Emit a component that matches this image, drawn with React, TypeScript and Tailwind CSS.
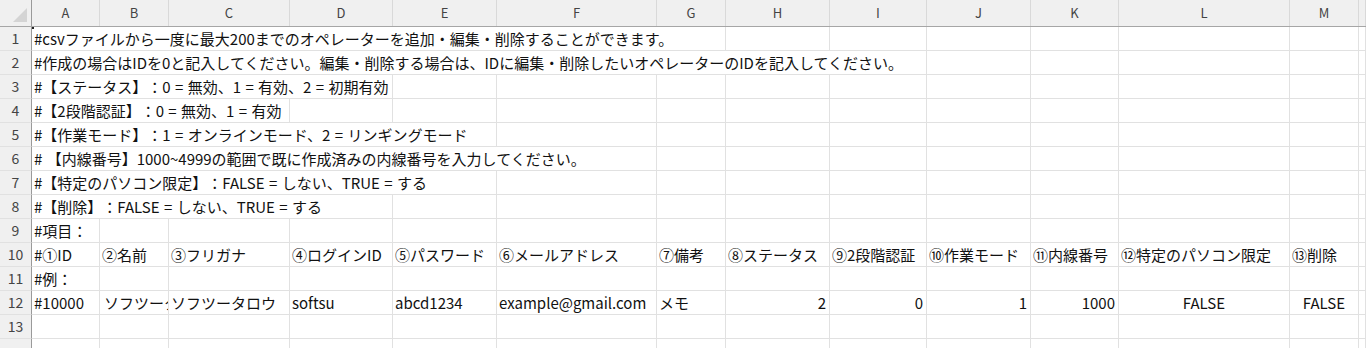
import React from "react"

const gridCols =
  "grid grid-cols-[32px_68px_69px_121px_103px_104px_160px_69px_104px_97px_104px_88px_171px_69px_1fr]"

const letters = ["A", "B", "C", "D", "E", "F", "G", "H", "I", "J", "K", "L", "M", ""]

const spanClass: Record<number, string> = {
  1: "col-span-1",
  2: "col-span-2",
  3: "col-span-3",
  4: "col-span-4",
  5: "col-span-5",
  6: "col-span-6",
  7: "col-span-7",
  8: "col-span-8",
  9: "col-span-9",
}

type Cell = { text?: string; align?: "left" | "right" | "center"; clip?: boolean }

// rows with a long note in column A that runs over the empty cells to its right
const notes: { text: string; span: number }[] = [
  { text: "#csvファイルから一度に最大200までのオペレーターを追加・編集・削除することができます。", span: 7 },
  { text: "#作成の場合はIDを0と記入してください。編集・削除する場合は、IDに編集・削除したいオペレーターのIDを記入してください。", span: 9 },
  { text: "#【ステータス】：0 = 無効、1 = 有効、2 = 初期有効", span: 4 },
  { text: "#【2段階認証】：0 = 無効、1 = 有効", span: 3 },
  { text: "#【作業モード】：1 = オンラインモード、2 = リンギングモード", span: 5 },
  { text: "# 【内線番号】1000~4999の範囲で既に作成済みの内線番号を入力してください。", span: 6 },
  { text: "#【特定のパソコン限定】：FALSE = しない、TRUE = する", span: 5 },
  { text: "#【削除】：FALSE = しない、TRUE = する", span: 4 },
  { text: "#項目：", span: 1 },
]

const headerRow: Cell[] = [
  { text: "#①ID" },
  { text: "②名前" },
  { text: "③フリガナ" },
  { text: "④ログインID" },
  { text: "⑤パスワード" },
  { text: "⑥メールアドレス" },
  { text: "⑦備考" },
  { text: "⑧ステータス" },
  { text: "⑨2段階認証" },
  { text: "⑩作業モード" },
  { text: "⑪内線番号" },
  { text: "⑫特定のパソコン限定" },
  { text: "⑬削除" },
  {},
]

const exampleRow: Cell[] = [
  { text: "#10000" },
  { text: "ソフツータロウ", clip: true },
  { text: "ソフツータロウ" },
  { text: "softsu" },
  { text: "abcd1234" },
  { text: "example@gmail.com" },
  { text: "メモ" },
  { text: "2", align: "right" },
  { text: "0", align: "right" },
  { text: "1", align: "right" },
  { text: "1000", align: "right" },
  { text: "FALSE", align: "center" },
  { text: "FALSE", align: "center" },
  {},
]

const emptyRow: Cell[] = Array.from({ length: 14 }, () => ({}))

const cellBase =
  "h-[24px] border-r border-b border-[#e1e1e1] flex items-center whitespace-nowrap leading-[23px] text-[15px] text-[#111]"

function RowNum({ n }: { n?: number }) {
  return (
    <div className="h-[24px] bg-[#f0f0f0] border-r border-r-[#9a9a9a] border-b border-b-[#e1e1e1] flex items-center justify-center text-[14px] text-[#444]">
      {n}
    </div>
  )
}

function DataCell({ cell }: { cell: Cell }) {
  const align =
    cell.align === "right" ? "justify-end pr-[3px]" : cell.align === "center" ? "justify-center" : "pl-[2px]"
  return (
    <div className={`${cellBase} ${align} ${cell.clip ? "overflow-hidden pl-[4px]" : ""}`}>{cell.text}</div>
  )
}

function CellRow({ n, cells }: { n?: number; cells: Cell[] }) {
  return (
    <div className={gridCols}>
      <RowNum n={n} />
      {cells.map((c, i) => (
        <DataCell key={i} cell={c} />
      ))}
    </div>
  )
}

function NoteRow({ n, text, span }: { n: number; text: string; span: number }) {
  const rest = 14 - span
  return (
    <div className={gridCols}>
      <RowNum n={n} />
      <div className={`${cellBase} ${spanClass[span]} pl-[2px] relative`}>
        {n === 1 && <span className="absolute left-0 top-0 w-[2px] h-[2px] bg-[#222]" />}
        {text}
      </div>
      {Array.from({ length: rest }).map((_, i) => (
        <div key={i} className={cellBase} />
      ))}
    </div>
  )
}

export default function App() {
  return (
    <div className="w-[1366px] h-[348px] overflow-hidden bg-white font-['Noto_Sans_CJK_JP','Noto_Sans',sans-serif] [text-spacing-trim:space-all] [word-spacing:1px]">
      <div className={`${gridCols} h-[27px] bg-[#f0f0f0] border-b border-[#a6a6a6]`}>
        <div className="relative border-r border-[#9a9a9a]">
          <svg className="absolute right-[4px] bottom-[4px]" width="14" height="14" viewBox="0 0 14 14">
            <polygon points="14,0 14,14 0,14" fill="#d4d4d4" />
          </svg>
        </div>
        {letters.map((l, i) => (
          <div
            key={i}
            className="border-r border-[#d9d9d9] flex items-center justify-center text-[13px] text-[#444]"
          >
            {l}
          </div>
        ))}
      </div>
      {notes.map((r, i) => (
        <NoteRow key={i} n={i + 1} text={r.text} span={r.span} />
      ))}
      <CellRow n={10} cells={headerRow} />
      <NoteRow n={11} text="#例：" span={1} />
      <CellRow n={12} cells={exampleRow} />
      <CellRow n={13} cells={emptyRow} />
      <CellRow cells={emptyRow} />
    </div>
  )
}
